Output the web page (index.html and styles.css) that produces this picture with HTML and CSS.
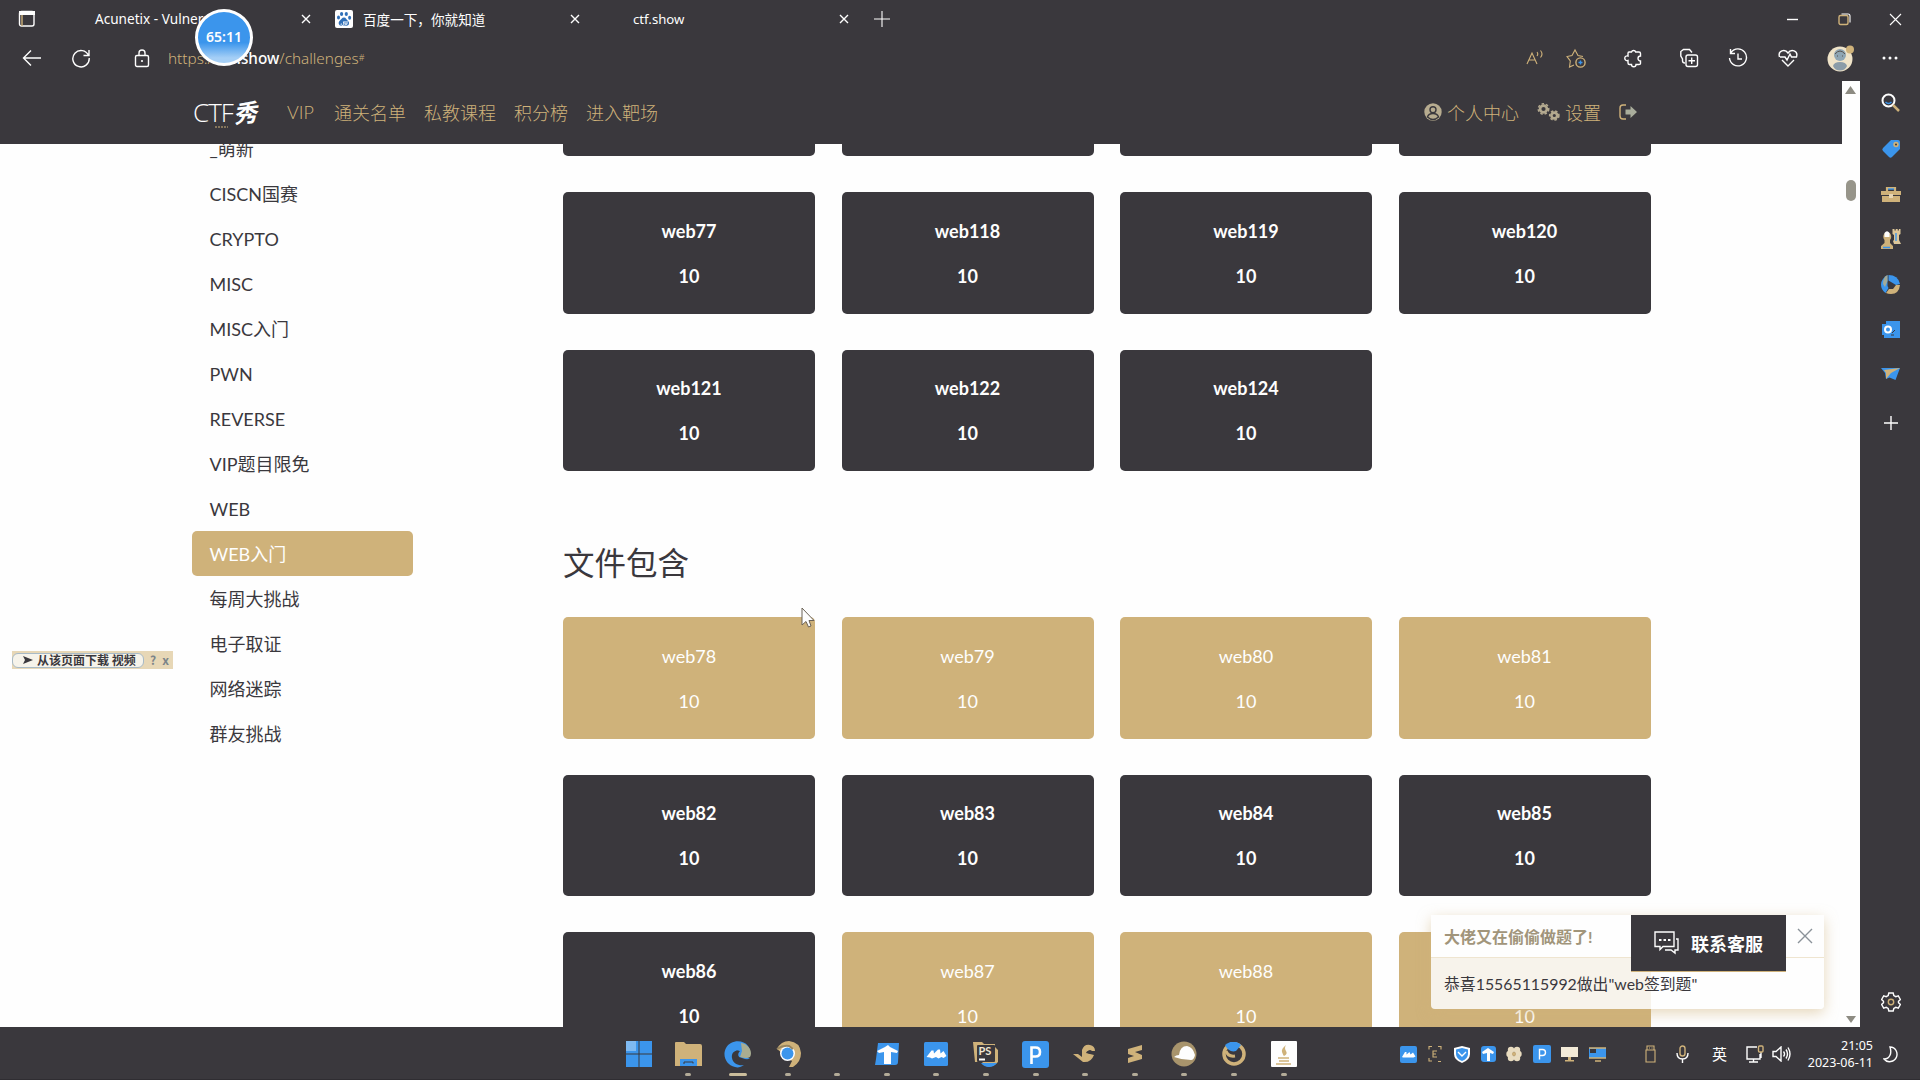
FILE: index.html
```html
<!DOCTYPE html>
<html lang="zh-CN">
<head>
<meta charset="utf-8">
<title>ctf.show</title>
<link rel="stylesheet" href="styles.css">
</head>
<body>
<header class="chrome">
  <div class="tabs">
    <svg class="tab-menu" width="18" height="18" viewBox="0 0 18 18"><rect x="1.5" y="1.5" width="14.5" height="14.5" rx="2" class="ln"/><path d="M1 1h16v4H1z" fill="#fefefe"/><path d="M4 5v11" class="ln tan"/></svg>
    <div class="tab tab-a"><span>Acunetix - Vulneral</span><svg class="x" width="10" height="10" viewBox="0 0 10 10"><path d="M1 1l8 8M9 1l-8 8" class="ln"/></svg></div>
    <div class="tab tab-b">
      <svg width="18" height="18" viewBox="0 0 18 18"><rect width="18" height="18" rx="2" fill="#fefefe"/><g fill="#2f6fb8"><ellipse cx="6.6" cy="4" rx="1.6" ry="2.1"/><ellipse cx="11.3" cy="4" rx="1.6" ry="2.1"/><ellipse cx="3.5" cy="7.6" rx="1.5" ry="2"/><ellipse cx="14.6" cy="7.8" rx="1.5" ry="2"/><path d="M9 7.5c2 0 2.400 2 3.800 3.200 2.200 1.800 1.300 5-1.400 5-1.600 0-3.200-.3-4.800 0-2.700.3-3.900-3-1.900-4.900C6.100 9.500 7 7.500 9 7.500z"/></g><path d="M6.300 13.500a1.300 1.300 0 102.300 0v-2M10 11v3.200h2V11" stroke="#fefefe" fill="none"/></svg>
      <span>百度一下，你就知道</span><svg class="x" width="10" height="10" viewBox="0 0 10 10"><path d="M1 1l8 8M9 1l-8 8" class="ln"/></svg></div>
    <div class="tab tab-c"><span>ctf.show</span><svg class="x" width="10" height="10" viewBox="0 0 10 10"><path d="M1 1l8 8M9 1l-8 8" class="ln"/></svg></div>
    <svg class="new-tab" width="16" height="16" viewBox="0 0 16 16"><path d="M0 8h16M8 0v16" class="ln thin"/></svg>
    <div class="win">
      <svg width="13" height="13" viewBox="0 0 13 13"><path d="M1 6.500h11" class="ln"/></svg>
      <svg width="13" height="13" viewBox="0 0 13 13"><rect x="1" y="2.500" width="9" height="9" rx="1.500" class="ln tan"/><path d="M3.500 1H10q2 0 2 2v6.500" class="ln thin"/></svg>
      <svg width="13" height="13" viewBox="0 0 13 13"><path d="M1 1l11 11M12 1L1 12" class="ln thin"/></svg>
    </div>
  </div>
  <div class="toolbar">
    <svg width="20" height="18" viewBox="0 0 20 18"><path d="M19 9H1.500M9 1.500L1.500 9 9 16.500" class="ln"/></svg>
    <svg class="reload" width="20" height="20" viewBox="0 0 20 20"><path d="M17.500 7.300A8.200 8.200 0 1018.200 10M18 2v5.500h-5.500" class="ln"/></svg>
    <svg class="lock" width="16" height="19" viewBox="0 0 16 19"><rect x="1.500" y="6.500" width="13" height="11" rx="1.500" class="ln"/><path d="M5 6V4a3 3 0 016 0v2" class="ln"/><circle cx="8" cy="12" r="1.100" fill="#fefefe"/></svg>
    <div class="url">https://<b>ctf.show</b>/challenges<sup>#</sup></div>
    <div class="tools">
      <svg width="18" height="18" viewBox="0 0 18 18"><path d="M1 15L6 4l5 11M3 11h6M11 3q1.500 2 0 4M14.500 1.500q3 3.500 0 7" class="ln tan thin"/></svg>
      <svg width="20" height="20" viewBox="0 0 20 20"><path d="M8 17l-4.500 2 .8-6L1 8.500l5-1L9 2l3 5.500 5 1" class="ln tan thin"/><circle cx="14.500" cy="14.500" r="4.600" class="ln tan"/><path d="M12.500 14.500h4M14.500 12.500v4" class="ln blue"/></svg>
      <svg width="20" height="20" viewBox="0 0 18 20"><path d="M5 4h2.500a2.200 2.200 0 014.200 0H15q1.500 0 1.500 1.500V8a2.200 2.200 0 100 5v2.500q0 1-1.500 1h-3a2.200 2.200 0 01-4.500 0H5.500q-1.500 0-1.500-1.500v-2.500a2.400 2.400 0 110-4.500V5.500Q4 4 5 4z" class="ln"/></svg>
      <svg width="20" height="20" viewBox="0 0 20 20"><rect x="7" y="7" width="11.500" height="11.500" rx="2" class="ln"/><path d="M12.700 9.500v6.500M9.500 12.700H16M6 15c-2 0-2.500-1-2.500-2.200V11L1.800 8V3.500L4.500 1.500h6L13 4.500" class="ln"/></svg>
      <svg width="20" height="20" viewBox="0 0 20 20"><path d="M3 4.500A8.500 8.500 0 111.500 10M2.500 1v4.500H7M10 5.500V11h4" class="ln"/></svg>
      <svg width="20" height="18" viewBox="0 0 20 18"><path d="M1.500 8C-.5 1.500 7-.5 10 4c3-4.500 10.500-2.500 8.500 4h-5L12 5l-3 6-2-3H2M4 11l6 6 6-6" class="ln"/></svg>
      <svg width="27" height="27" viewBox="0 0 27 27"><circle cx="13" cy="14" r="12.500" fill="#efe3c8"/><circle cx="23" cy="4.500" r="4" fill="#cfb27a"/><circle cx="13" cy="10" r="6" fill="#8fa6b4"/><path d="M6 21q1-4 7-4t7 4q-2 4.500-7 4.500t-7-4.500z" fill="#8b9ca8"/><path d="M8 9q5-6 10 0M10 11h1M15 11h1" stroke="#57534f" fill="none"/></svg>
      <svg width="16" height="6" viewBox="0 0 16 6"><g fill="#fefefe"><circle cx="2" cy="3" r="1.500"/><circle cx="8" cy="3" r="1.500"/><circle cx="14" cy="3" r="1.500"/></g></svg>
    </div>
  </div>
  <div class="timer">65:11</div>
</header>

<div class="middle">
  <div class="page">
    <nav class="nav">
      <div class="logo"><span>CTF</span><i>秀</i><svg class="mark" width="13" height="2" viewBox="0 0 13 2"><path d="M0 1h13" stroke="#cfb27a" stroke-dasharray="2 1"/></svg></div>
      <a>VIP</a><a>通关名单</a><a>私教课程</a><a>积分榜</a><a>进入靶场</a>
      <div class="user">
        <svg width="18" height="18" viewBox="0 0 18 18"><circle cx="9" cy="9" r="8.700" fill="#b7ac90"/><circle cx="9" cy="6.800" r="3" class="hole"/><path d="M3.500 14q1-3.500 5.500-3.500t5.500 3.500q-5.500 5-11 0z" class="hole"/></svg><a>个人中心</a>
        <svg class="gears" width="23" height="18" viewBox="0 0 23 18"><circle cx="6.500" cy="6" r="3.400" class="gear"/><circle cx="6.500" cy="6" r="5.200" class="teeth"/><circle cx="17.300" cy="12.500" r="2.900" class="gear"/><circle cx="17.300" cy="12.500" r="4.600" class="teeth"/></svg><a class="set">设置</a>
        <svg width="19" height="16" viewBox="0 0 19 16"><path d="M7 1H4Q1 1 1 4v8q0 3 3 3h3" class="ln tan"/><path d="M6.500 5.500h5V2l6.500 6-6.500 6v-3.500h-5z" fill="#a9ad9c"/></svg>
      </div>
    </nav>
    <div class="main">
      <ul class="cats">
        <li>_萌新</li><li>CISCN国赛</li><li>CRYPTO</li><li>MISC</li><li>MISC入门</li><li>PWN</li><li>REVERSE</li><li>VIP题目限免</li><li>WEB</li><li class="on">WEB入门</li><li>每周大挑战</li><li>电子取证</li><li>网络迷踪</li><li>群友挑战</li>
      </ul>
      <div class="board">
        <div class="cards">
          <div class="card"></div><div class="card"></div><div class="card"></div><div class="card"></div>
          <div class="card"><p>web77</p><p>10</p></div><div class="card"><p>web118</p><p>10</p></div><div class="card"><p>web119</p><p>10</p></div><div class="card"><p>web120</p><p>10</p></div>
          <div class="card"><p>web121</p><p>10</p></div><div class="card"><p>web122</p><p>10</p></div><div class="card"><p>web124</p><p>10</p></div>
        </div>
        <h3>文件包含</h3>
        <div class="cards">
          <div class="card done"><p>web78</p><p>10</p></div><div class="card done"><p>web79</p><p>10</p></div><div class="card done"><p>web80</p><p>10</p></div><div class="card done"><p>web81</p><p>10</p></div>
          <div class="card"><p>web82</p><p>10</p></div><div class="card"><p>web83</p><p>10</p></div><div class="card"><p>web84</p><p>10</p></div><div class="card"><p>web85</p><p>10</p></div>
          <div class="card"><p>web86</p><p>10</p></div><div class="card done"><p>web87</p><p>10</p></div><div class="card done"><p>web88</p><p>10</p></div><div class="card done last"><p></p><p>10</p></div>
        </div>
      </div>
    </div>
    <div class="grab"><span class="grab-btn"><svg width="10" height="8" viewBox="0 0 10 8"><path d="M0 0l10 4-10 4 2-4z" fill="#3a383d"/></svg>从该页面下载 视频</span><span>?</span><span>x</span></div>
    <div class="toast">
      <div class="toast-head">大佬又在偷偷做题了!<svg width="16" height="16" viewBox="0 0 16 16"><path d="M1 1l14 14M15 1L1 15" stroke="#8a9299" stroke-width="1.400"/></svg></div>
      <div class="toast-body">恭喜15565115992做出"web签到题"</div>
    </div>
    <div class="service"><svg width="25" height="24" viewBox="0 0 25 24"><path d="M1 1h19v14.500H9L6 18.500v-3H1zM22 8h2v11h-3v3l-4-3h-6" class="ln"/><path d="M5 9h2.500M9.500 9H12M14 9h2.500" class="ln bold"/></svg>联系客服</div>
    <svg class="cursor" width="14" height="21" viewBox="0 0 14 21"><path d="M1 1v17l4-3.500L7.500 20l2.500-1-2-5.500h5z" fill="#fefefe" stroke="#6b6256"/></svg>
  </div>
  <div class="scroll"><svg width="11" height="8" viewBox="0 0 11 8"><path d="M5.500 0L11 8H0z" fill="#8d8b82"/></svg><i></i><svg width="10" height="7" viewBox="0 0 10 7"><path d="M5 7L0 0h10z" fill="#8d8b82"/></svg></div>
  <aside class="rail">
    <svg width="20" height="20" viewBox="0 0 20 20"><circle cx="7.500" cy="7.500" r="6" class="ln w2"/><path d="M4.500 9q3 3 6 0" class="ln blue"/><path d="M12 12l6 6" stroke="#cfb27a" stroke-width="2.500"/></svg>
    <svg width="20" height="20" viewBox="0 0 20 20"><path d="M10 1h7q2 0 2 2v7l-8 8q-1.500 1.500-3 0l-6-6q-1.500-1.500 0-3z" fill="#3b95ec"/><circle cx="15" cy="5.500" r="2.700" fill="#cfb27a"/><circle cx="15" cy="5.500" r="1" fill="#3a383d"/></svg>
    <svg width="20" height="16" viewBox="0 0 20 16"><path d="M6 5V2h8v3" fill="none" stroke="#cfb27a" stroke-width="2.200"/><path d="M7 3h6" class="ln blue"/><path d="M0 5h20v4H0zM1 10h18v6H1z" fill="#cfb27a"/><path d="M8 8h4v4H8z" fill="#e7d6b4"/></svg>
    <svg width="20" height="20" viewBox="0 0 20 20"><path d="M3.500 11a4 4.500 0 115.500 0v3l3 3v3H0v-3l3.500-3z" fill="#cfb27a"/><path d="M3.500 8V4q2.500-3.500 5 0v4z" fill="#fefefe"/><path d="M11.500 0h2v1.500h1.200V0h2v1.500h1.200V0h1.600v5l-1.500 1v5l2 4h-7l-1-3 1-1V6l-1.500-1z" fill="#ddc79a"/><path d="M15 4v8M2 18.500h7" class="ln blue"/></svg>
    <svg width="19" height="19" viewBox="0 0 19 19"><path d="M7.500 0Q17 0 19 9l-4 1-7.500-4.500z" fill="#3b95ec"/><path d="M6.500 0v11l1 2-3 5Q0 15 0 9.500T6.500 0z" fill="#3b95ec"/><path d="M6.500 0v6L4 12 2 9q0-7 4.500-9z" fill="#a3aa97"/><path d="M19 10q-1 9-9 9-3 0-5-1l3-4 4 0 3-4z" fill="#cfb27a"/></svg>
    <svg width="18" height="18" viewBox="0 0 18 18"><path d="M4 0h14v17H2v-3H0V3h4z" fill="#3b95ec"/><circle cx="6" cy="8.500" r="3" class="ln w2"/><path d="M10 12l3-3M9 14h3" stroke="#3a383d"/></svg>
    <svg width="19" height="12" viewBox="0 0 19 12"><path d="M0 0h19l-4.500 12-6-2.500L5 11 4 5z" fill="#3b95ec"/><path d="M3 2l16-2-9 5-5 6V5z" fill="#cfb27a"/></svg>
    <svg width="14" height="14" viewBox="0 0 14 14"><path d="M0 7h14M7 0v14" class="ln"/></svg>
    <svg class="cog" width="20" height="20" viewBox="0 0 20 20"><path d="M7.800 1h4.400l.6 2.500 2 1.200 2.500-.8 2.100 3.600-1.900 1.800v1.400l1.900 1.800-2.100 3.600-2.500-.8-2 1.200-.6 2.500H7.800l-.6-2.500-2-1.200-2.500.8-2.100-3.600 1.900-1.800V9.300L.6 7.500l2.100-3.600 2.500.8 2-1.200z" class="ln"/><circle cx="10" cy="10" r="2.700" class="ln tan"/></svg>
  </aside>
</div>

<footer class="taskbar">
  <div class="apps">
    <div class="app start"><svg width="26" height="26" viewBox="0 0 26 26"><path d="M0 0h12.500v12.500H0zM13.500 0H26v12.500H13.500zM0 13.500h12.500V26H0zM13.500 13.500H26V26H13.500z" fill="#3b95ec"/><path d="M0 0h10v10H0z" fill="#7fbaf2"/></svg></div>
    <div class="app"><svg width="27" height="24" viewBox="0 0 27 24"><path d="M0 1q0-1 1-1h8l2 2h14q2 0 2 2v20H0z" fill="#cfb27a"/><path d="M5 17h17v7H5z" fill="#3b95ec"/><path d="M9 22v-2h9v1.500" stroke="#3a383d" fill="none"/></svg></div>
    <div class="app active"><svg width="27" height="27" viewBox="0 0 27 27"><path d="M26 17c-3 2-10 3-12-2-1-2 0-4 1-5-4-1-8 2-7 7 1 6 7 8 12 7-3 2-6 3-9 2C2 24-2 14 2 7 6-1 19-2 24 5c4 6 2 12-1 12z" fill="#3b95ec"/><path d="M17 2c8 1 12 9 9 14q-3 2-10 0l2-6z" fill="#a9ad91"/><path d="M9 13q2-5 7-3-3 3-1 6l9 3q-8 4-11 1t-4-7z" fill="#3a383d"/></svg></div>
    <div class="app"><svg width="26" height="26" viewBox="0 0 26 26"><path d="M2 8Q6 0 14 0q11 1 12 12 0 9-8 14h-4l3-6z" fill="#cfb27a"/><circle cx="12.500" cy="12.500" r="7.500" fill="#fefefe"/><circle cx="12.500" cy="12.500" r="6" fill="#3b95ec"/><path d="M2 8q6-4 12-3l4 3" stroke="#97855f" stroke-width="2" fill="none"/></svg></div>
    <div class="app"></div>
    <div class="app"><svg width="24" height="22" viewBox="0 0 24 22"><path d="M3 0h21l-1 19q0 3-3 3H0l1-6z" fill="#3b95ec"/><path d="M2 8l8-4 3-2 2 2 8 4-1 2-6-1v12H9V9L4 10z" fill="#fefefe"/></svg></div>
    <div class="app"><svg width="24" height="24" viewBox="0 0 24 24"><rect width="24" height="24" rx="1.500" fill="#3b95ec"/><path d="M2.500 15l5-6.500 2 0 .5 3 4-4 2 0 .5 4 3-2.500L22.500 14l-3 2-2-1-3 1.500-2.500-1.500-4 1.500-2-1z" fill="#fefefe"/></svg></div>
    <div class="app"><svg width="25" height="26" viewBox="0 0 25 26"><path d="M0 1h9l2 2h11v3l3 3v12q-6 6-12 4l-4-4H2z" fill="#cfb27a"/><path d="M8 22h16q-3 4-8 4-5 0-8-4z" fill="#3b95ec"/><rect x="4" y="4" width="18" height="17" rx="1" fill="#3a383d"/><path d="M6 18.500h6" class="ln w2"/><text x="5.500" y="14" class="ps">PS</text></svg></div>
    <div class="app"><svg width="27" height="27" viewBox="0 0 27 27"><rect width="27" height="27" rx="3" fill="#3b95ec"/><path d="M9.500 23V6.500h4q4.500 0 4.500 4.500t-4.500 4.500h-4" stroke="#fefefe" stroke-width="2.600" fill="none"/></svg></div>
    <div class="app"><svg width="24" height="20" viewBox="0 0 24 20"><path d="M0 10h5l4 3V6q2-6 8-5 5 1 5 6h-5q-3-1-4 2l8 2q-3 8-11 7z" fill="#cfb27a"/><circle cx="17" cy="8" r="2" fill="#3a383d"/></svg></div>
    <div class="app"><svg width="14" height="18" viewBox="0 0 14 18"><path d="M0 4l14-4v5L7 7l7 3v4L0 18v-5l6-2-6-2z" fill="#cfb27a"/></svg></div>
    <div class="app"><svg width="26" height="26" viewBox="0 0 26 26"><circle cx="13" cy="13" r="12.500" fill="#a8946c"/><path d="M3 16q2-2 5-2 1-9 8-9 6 1 8 9-1 5-4 5-9 0-17-3z" fill="#fefefe"/></svg></div>
    <div class="app"><svg width="24" height="24" viewBox="0 0 24 24"><circle cx="12" cy="12" r="10" fill="none" stroke="#cfb27a" stroke-width="3.500"/><path d="M3 3q9-7 16 0l-5 6q-7 2-11-6z" fill="#3b95ec"/><path d="M4 9q2 6 9 5" stroke="#cfb27a" stroke-width="3" fill="none"/></svg></div>
    <div class="app"><svg width="26" height="26" viewBox="0 0 26 26"><rect width="26" height="26" rx="1" fill="#fefefe"/><path d="M15 4q-5 4-4 7t2 4q4-2 2-5t0-6z" fill="#cfb27a"/><path d="M7 17h11M8 20h10M5 23h15" stroke="#cfb27a" stroke-width="1.500"/></svg></div>
  </div>
  <div class="tray">
    <svg width="17" height="17" viewBox="0 0 17 17"><rect width="17" height="17" rx="2" fill="#3b95ec"/><path d="M2 11l3-5h1.500v2.500L9.500 6l1 2.500L13 6.500l2.500 4-2 1H3z" fill="#fefefe"/></svg>
    <svg width="14" height="16" viewBox="0 0 14 16"><path d="M4 .5H1v3M1 12v3h3M10 .5h3v3M10 15.500h3M9 5H5v6h4M5 8h3" class="ln tan thin"/></svg>
    <svg width="16" height="17" viewBox="0 0 16 17"><path d="M8 0l8 2v6q0 6-8 9-8-3-8-9V2z" fill="#fefefe"/><path d="M8 2l6 1.500V8q0 4.500-6 7-6-2.500-6-7V3.500z" fill="#3b95ec"/><path d="M4 6l4 4 4-4" class="ln"/></svg>
    <svg width="15" height="16" viewBox="0 0 15 16"><rect width="15" height="16" rx="3" fill="#3b95ec"/><path d="M1 6l6-4 6 4-1 2-3-1v8H6V7L2 8z" fill="#fefefe"/></svg>
    <svg width="16" height="16" viewBox="0 0 16 16"><g fill="#e9dcc0"><circle cx="5" cy="4" r="3.200"/><circle cx="11" cy="4" r="3.200"/><circle cx="3.500" cy="8" r="3.200"/><circle cx="12.500" cy="8" r="3.200"/><circle cx="5" cy="12" r="3.200"/><circle cx="11" cy="12" r="3.200"/></g><circle cx="8" cy="8" r="2" fill="#cfb27a"/></svg>
    <svg width="18" height="18" viewBox="0 0 18 18"><rect width="18" height="18" rx="2" fill="#3b95ec"/><path d="M6.500 14.500V4.500h3q3 0 3 3t-3 3h-3" class="ln"/></svg>
    <svg width="17" height="16" viewBox="0 0 17 16"><path d="M0 1h17v10H0z" fill="#f3ead8"/><path d="M7 11h3v3h3v1.500H4V14h3z" fill="#cfb27a"/></svg>
    <svg width="17" height="15" viewBox="0 0 17 15"><path d="M0 1h17v10H0z" fill="#3b95ec"/><path d="M1 2h6v4H1z" fill="#3a383d"/><path d="M0 1h17M0 11h17M6 14h6" class="ln tan"/></svg>
    <svg class="usb" width="12" height="18" viewBox="0 0 12 18"><path d="M1 5h9v12H1zM2 5V1h7v4M4 3h1M6.500 3h1" class="ln tan thin"/></svg>
    <svg class="mic" width="13" height="18" viewBox="0 0 13 18"><rect x="4" y="1" width="5" height="10" rx="2.500" class="ln tan"/><path d="M1 8q0 6 5.500 6T12 8M6.500 14v4" class="ln"/></svg>
    <span class="ime">英</span>
    <svg class="net" width="19" height="18" viewBox="0 0 19 18"><path d="M12 2H2v12h13V9M4 17h9M8.500 14v3M16 7v6" class="ln"/><rect x="13.500" y="1" width="4.500" height="6" rx="1" class="ln tan"/></svg>
    <svg class="vol" width="19" height="16" viewBox="0 0 19 16"><path d="M1 5.500h3L9 1v14l-5-4.500H1zM11.500 5.500q2 2.500 0 5M14 3.500q3 4.500 0 9M16 1.500q4 6.500 0 13" class="ln"/></svg>
    <div class="clock">21:05<br>2023-06-11</div>
    <svg width="15" height="17" viewBox="0 0 15 17"><path d="M7 1c6 0 8 6 6.500 10-2 5-9 6.500-12.500 2C7 13 9 7 7 1z" class="ln"/></svg>
  </div>
</footer>
</body>
</html>
```
FILE: styles.css
```css
* { box-sizing: border-box; }
body {
  margin: 0;
  width: 1920px;
  height: 1080px;
  overflow: hidden;
  display: flex;
  flex-direction: column;
  background: #3a383d;
  color: #fefefe;
  font-family: Lato, "Noto Sans CJK SC", sans-serif;
}
svg { display: block; flex: none; }
.ln { fill: none; stroke: #fefefe; stroke-width: 1.4; }
.thin { stroke-width: 1.1; }
.w2 { stroke-width: 2; }
.bold { stroke-width: 1.8; }
.tan { stroke: #cfb27a; }
.blue { stroke: #3b95ec; }

/* browser chrome */
.chrome {
  position: relative;
  height: 81px;
  font-family: "Noto Sans", "Noto Sans CJK SC", sans-serif;
}
.tabs { display: flex; align-items: center; height: 38px; padding-left: 18px; }
.tab { display: flex; align-items: center; font-size: 13.6px; white-space: nowrap; }
.tab span { margin-top: -1px; }
.tab .x { margin-left: auto; }
.tab-a { margin-left: 59px; width: 216px; }
.tab-b { margin-left: 24px; width: 245px; gap: 10px; }
.tab-c { margin-left: 53px; width: 216px; font-size: 13.2px; }
.new-tab { margin-left: 25px; }
.win { display: flex; gap: 38.500px; margin-left: auto; padding-right: 18px; }
.toolbar { display: flex; align-items: center; height: 40px; padding-left: 22px; }
.reload { margin-left: 29px; }
.lock { margin-left: 43px; }
.url { margin-left: 18px; font-size: 15.3px; line-height: 20px; font-weight: 300; color: #cfb27a; }
.url b { font-weight: 500; color: #fefefe; }
.url sup { font-size: 9px; line-height: 0; vertical-align: 3px; }
.tools { display: flex; align-items: center; margin-left: auto; padding-right: 22px; }
.tools svg:nth-child(2) { margin-left: 22px; }
.tools svg:nth-child(3) { margin-left: 37px; }
.tools svg:nth-child(4) { margin-left: 36px; }
.tools svg:nth-child(5) { margin-left: 29px; }
.tools svg:nth-child(6) { margin-left: 30px; }
.tools svg:nth-child(7) { margin-left: 29px; }
.tools svg:nth-child(8) { margin-left: 28px; }
.timer {
  position: absolute;
  left: 195px;
  top: 9px;
  width: 58px;
  height: 57px;
  border: 3px solid #fefefe;
  border-radius: 50%;
  background: linear-gradient(#3b95ec 60%, #a5cff6 90%);
  text-align: center;
  font: 600 14px/50px "Noto Sans", sans-serif;
}

/* page */
.middle { flex: 1; display: flex; min-height: 0; }
.page { position: relative; width: 1842px; background: #fefefe; overflow: hidden; }
.nav {
  position: relative;
  z-index: 1;
  display: flex;
  align-items: center;
  gap: 18px;
  height: 63px;
  padding: 0 0 1px 193px;
  background: #3a383d;
  color: #cfb27a;
  font-size: 18px;
  font-weight: 300;
}
.nav > a:nth-of-type(2) { margin-left: 2px; }
.logo { position: relative; display: flex; align-items: center; width: 76px; color: #fefefe; }
.logo span { font: 300 26px/30px "Open Sans", sans-serif; letter-spacing: -1px; }
.logo i { font: italic 700 24px/30px "Noto Sans CJK SC", sans-serif; transform: rotate(-6deg); }
.mark { position: absolute; left: 22px; top: 29px; }
.user { display: flex; align-items: center; margin-left: auto; padding-right: 204px; }
.user a { margin-left: 5px; }
.gears { margin-left: 18px; }
.user .set { margin-right: 18px; }
.hole { fill: none; stroke: #3a383d; stroke-width: 1.4; }
.gear { fill: none; stroke: #b3a98f; stroke-width: 2.6; }
.teeth { fill: none; stroke: #b3a98f; stroke-width: 1.6; stroke-dasharray: 2.4 2; }
.main { display: flex; height: 883px; }
.cats {
  list-style: none;
  width: 221px;
  margin: -18px 0 0 192px;
  padding: 0;
  flex: none;
  color: #3a383d;
  font-size: 18px;
}
.cats li { height: 45px; line-height: 47px; padding-left: 17.500px; border-radius: 5px; }
.cats .on { background: #cfb27a; color: #fefefe; }
.board { margin: -109.600px 0 0 150px; width: 1088px; flex: none; }
.cards {
  display: grid;
  grid-template-columns: repeat(4, 252px);
  grid-auto-rows: 121.500px;
  gap: 36.200px 26.500px;
}
.card {
  background: #3a383d;
  border-radius: 5px;
  padding-top: 16.500px;
  text-align: center;
  font-size: 18px;
  font-weight: 700;
}
.card p { margin: 0; height: 45px; line-height: 45px; }
.card.done { background: #cfb27a; font-weight: 400; }
.board h3 { margin: 67.500px 0 30.300px; height: 48px; font-size: 31.500px; line-height: 48px; font-weight: 400; color: #3a383d; }

/* overlays */
.grab {
  position: absolute;
  left: 12px;
  top: 570px;
  width: 161px;
  height: 18px;
  display: flex;
  align-items: center;
  gap: 6px;
  background: #e7d7b6;
  color: #3a383d;
  font: 600 12px/16px "Noto Sans CJK SC", sans-serif;
}
.grab > span + span { color: #7c8489; }
.grab-btn {
  display: flex;
  align-items: center;
  gap: 4px;
  width: 132px;
  height: 15px;
  padding-left: 10px;
  border: 1px solid #a8bac6;
  border-radius: 6px;
  background: #f6f3ea;
  white-space: nowrap;
}
.toast {
  position: absolute;
  left: 1431px;
  top: 834px;
  width: 393px;
  height: 94px;
  border-radius: 4px;
  background: rgba(254, 254, 254, .86);
  box-shadow: 0 4px 14px rgba(207, 178, 122, .5);
  font-size: 16px;
}
.toast-head {
  display: flex;
  align-items: center;
  justify-content: space-between;
  height: 43px;
  padding: 0 11px 0 13px;
  border-bottom: 1px solid #efe5d0;
  background: #fefefe;
  color: #a1957b;
  font-weight: 700;
}
.toast-body { padding: 0 13px; font-size: 15.850px; line-height: 52px; color: #3a383d; }
.service {
  position: absolute;
  left: 1631px;
  top: 834px;
  width: 155px;
  height: 57px;
  display: flex;
  align-items: center;
  gap: 12px;
  padding-left: 23px;
  background: #3a383d;
  border-bottom: 1px solid #cfb27a;
  font-size: 18px;
  font-weight: 700;
}
.cursor { position: absolute; left: 801px; top: 526px; }
.scroll {
  display: flex;
  flex-direction: column;
  align-items: center;
  width: 18px;
  padding: 5px 1px 4px 0;
  background: #fefefe;
}
.scroll i { width: 10px; height: 21px; margin: 86px 0 auto; border-radius: 5px; background: #97958a; }
.rail { width: 60px; display: flex; flex-direction: column; align-items: center; padding: 12px 0 15px 1px; }
.rail svg:nth-child(2) { margin-top: 26px; }
.rail svg:nth-child(3) { margin-top: 27px; }
.rail svg:nth-child(4) { margin-top: 27px; }
.rail svg:nth-child(5) { margin-top: 26px; }
.rail svg:nth-child(6) { margin-top: 27px; }
.rail svg:nth-child(7) { margin-top: 29px; }
.rail svg:nth-child(8) { margin-top: 36px; }
.rail .cog { margin-top: auto; }

/* taskbar */
.taskbar { display: flex; height: 53px; padding-top: 2px; border-bottom: 1px solid #2f2d32; }
.apps { display: flex; padding-left: 614px; }
.app {
  position: relative;
  width: 49.600px;
  display: flex;
  align-items: center;
  justify-content: center;
}
.app::after {
  content: "";
  position: absolute;
  left: calc(50% - 3px);
  top: 44px;
  width: 6px;
  height: 3px;
  border-radius: 2px;
  background: #b3ab98;
}
.app.start::after { display: none; }
.app.active::after { left: calc(50% - 9px); width: 18px; background: #cbbd9c; }
.ps { font: 700 11px Lato, sans-serif; fill: #f1e7d2; }
.tray { display: flex; align-items: center; margin-left: auto; padding-right: 22px; }
.tray svg + svg { margin-left: 10.500px; }
.tray svg:nth-child(2) { margin-left: 11px; }
.tray svg:nth-child(3) { margin-left: 12px; }
.tray .usb { margin-left: 39px; }
.tray .mic { margin-left: 19px; }
.ime { margin-left: 23px; font: 400 15px/20px "Noto Sans CJK SC", sans-serif; }
.tray .net { margin-left: 18px; }
.tray .vol { margin-left: 8px; }
.clock {
  width: 82px;
  text-align: right;
  font: 400 12.500px/17px "Noto Sans", sans-serif;
  margin: 0 10px 0 0;
}
```
